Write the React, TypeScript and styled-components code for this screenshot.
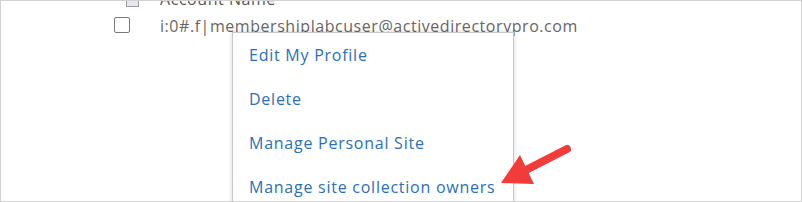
import React from "react";
import styled, { createGlobalStyle } from "styled-components";

const GlobalStyle = createGlobalStyle`
  html, body {
    margin: 0;
    padding: 0;
    background: #fff;
  }
`;

const Frame = styled.div`
  position: relative;
  box-sizing: border-box;
  width: 802px;
  height: 202px;
  border: 1px solid #d2d2d2;
  overflow: hidden;
  background: #fff;
  font-family: "Open Sans", "Noto Sans", sans-serif;
`;

const List = styled.div`
  display: flex;
  flex-direction: column;
  padding-left: 113px;
  margin-top: -16px;
`;

const Row = styled.div`
  display: flex;
  align-items: center;
  height: 27px;
`;

const Cell = styled.div`
  width: 46px;
  display: flex;
  justify-content: center;
`;

const HeaderIcon = styled.div`
  width: 13px;
  height: 16px;
  margin-left: -10px;
  border: 1px solid #9a9aa8;
  background: #e8e8f0;
  box-sizing: border-box;
`;

const Checkbox = styled.span`
  display: block;
  box-sizing: border-box;
  width: 16px;
  height: 16px;
  border: 1px solid #7a7a7a;
  border-radius: 2px;
  margin-left: -31px;
  margin-top: -1px;
`;

const Label = styled.span<{ $head?: boolean }>`
  font-size: 16px;
  letter-spacing: 0.55px;
  color: ${(p) => (p.$head ? "#555" : "#666")};
  white-space: nowrap;
`;

const Menu = styled.ul`
  position: absolute;
  left: 231px;
  top: 31px;
  width: 280px;
  height: 200px;
  margin: 0;
  padding: 0;
  list-style: none;
  background: #fff;
  border: 1px solid #c8c8c8;
  box-shadow: 0 0 4px rgba(0, 0, 0, 0.18);
`;

const MenuItem = styled.li`
  height: 44px;
  display: flex;
  align-items: center;
  padding-left: 16px;
  font-size: 16px;
  letter-spacing: 0.75px;
  color: #2b6fb8;
  white-space: nowrap;
`;

const Arrow = styled.svg`
  position: absolute;
  left: 495px;
  top: 140px;
`;

export default function App() {
  const items = [
    "Edit My Profile",
    "Delete",
    "Manage Personal Site",
    "Manage site collection owners",
  ];
  return (
    <>
      <GlobalStyle />
      <Frame>
        <List>
          <Row>
            <Cell>
              <HeaderIcon />
            </Cell>
            <Label $head>Account Name</Label>
          </Row>
          <Row>
            <Cell>
              <Checkbox />
            </Cell>
            <Label>i:0#.f|membershiplabcuser@activedirectorypro.com</Label>
          </Row>
        </List>
        <Menu>
          {items.map((t) => (
            <MenuItem key={t}>{t}</MenuItem>
          ))}
        </Menu>
        <Arrow width="80" height="50" viewBox="0 0 80 50">
          <line x1="71" y1="8" x2="28" y2="30" stroke="#f23b3b" strokeWidth="8" strokeLinecap="round" />
          <polygon points="5,42 24,14 38,43" fill="#f23b3b" />
        </Arrow>
      </Frame>
    </>
  );
}
